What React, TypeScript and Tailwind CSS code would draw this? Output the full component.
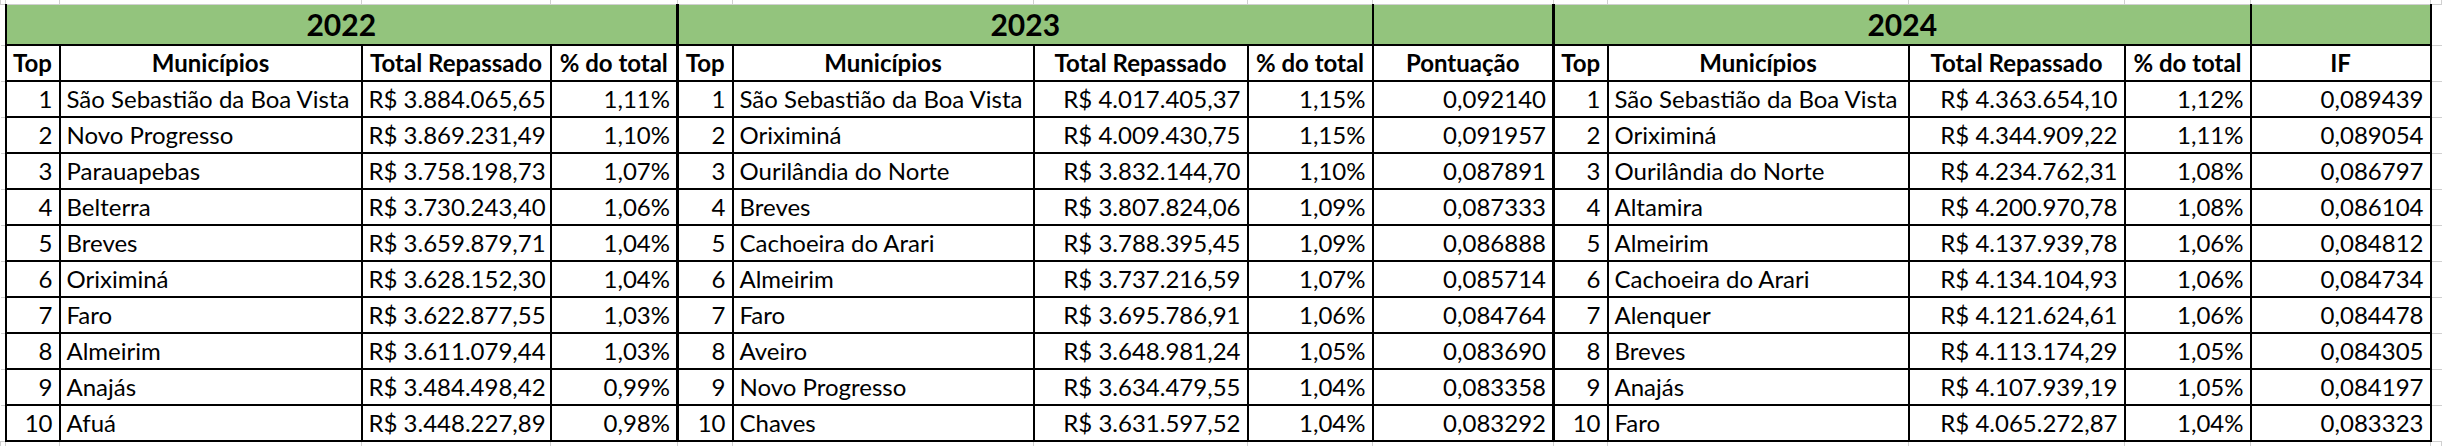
import React from 'react';

type Row = [string, string, string];

const y2022: Row[] = [
  ['São Sebastião da Boa Vista', 'R$ 3.884.065,65', '1,11%'],
  ['Novo Progresso', 'R$ 3.869.231,49', '1,10%'],
  ['Parauapebas', 'R$ 3.758.198,73', '1,07%'],
  ['Belterra', 'R$ 3.730.243,40', '1,06%'],
  ['Breves', 'R$ 3.659.879,71', '1,04%'],
  ['Oriximiná', 'R$ 3.628.152,30', '1,04%'],
  ['Faro', 'R$ 3.622.877,55', '1,03%'],
  ['Almeirim', 'R$ 3.611.079,44', '1,03%'],
  ['Anajás', 'R$ 3.484.498,42', '0,99%'],
  ['Afuá', 'R$ 3.448.227,89', '0,98%'],
];

const y2023: [string, string, string, string][] = [
  ['São Sebastião da Boa Vista', 'R$ 4.017.405,37', '1,15%', '0,092140'],
  ['Oriximiná', 'R$ 4.009.430,75', '1,15%', '0,091957'],
  ['Ourilândia do Norte', 'R$ 3.832.144,70', '1,10%', '0,087891'],
  ['Breves', 'R$ 3.807.824,06', '1,09%', '0,087333'],
  ['Cachoeira do Arari', 'R$ 3.788.395,45', '1,09%', '0,086888'],
  ['Almeirim', 'R$ 3.737.216,59', '1,07%', '0,085714'],
  ['Faro', 'R$ 3.695.786,91', '1,06%', '0,084764'],
  ['Aveiro', 'R$ 3.648.981,24', '1,05%', '0,083690'],
  ['Novo Progresso', 'R$ 3.634.479,55', '1,04%', '0,083358'],
  ['Chaves', 'R$ 3.631.597,52', '1,04%', '0,083292'],
];

const y2024: [string, string, string, string][] = [
  ['São Sebastião da Boa Vista', 'R$ 4.363.654,10', '1,12%', '0,089439'],
  ['Oriximiná', 'R$ 4.344.909,22', '1,11%', '0,089054'],
  ['Ourilândia do Norte', 'R$ 4.234.762,31', '1,08%', '0,086797'],
  ['Altamira', 'R$ 4.200.970,78', '1,08%', '0,086104'],
  ['Almeirim', 'R$ 4.137.939,78', '1,06%', '0,084812'],
  ['Cachoeira do Arari', 'R$ 4.134.104,93', '1,06%', '0,084734'],
  ['Alenquer', 'R$ 4.121.624,61', '1,06%', '0,084478'],
  ['Breves', 'R$ 4.113.174,29', '1,05%', '0,084305'],
  ['Anajás', 'R$ 4.107.939,19', '1,05%', '0,084197'],
  ['Faro', 'R$ 4.065.272,87', '1,04%', '0,083323'],
];

const colWidths = [
  'w-[5px]',
  'w-[54px]', 'w-[302px]', 'w-[189px]', 'w-[127px]',
  'w-[55px]', 'w-[301px]', 'w-[214px]', 'w-[125px]', 'w-[181px]',
  'w-[54px]', 'w-[301px]', 'w-[216px]', 'w-[126px]', 'w-[180px]',
  'w-[11px]',
];

// excel gridline cells outside the table
const grid = 'border border-[#d0d0d0] p-0';
const cell = 'border-2 border-black px-[6px] py-0 whitespace-nowrap overflow-hidden';
const num = cell + ' text-right';
const txt = cell + ' text-left';
const head = cell + ' text-center font-bold';
const thick = 'border-l-[3px]';
const banner = ' bg-[#93c47d] border-t border-t-[#d0d0d0]';

export default function App() {
  return (
    <div className="w-[2442px] h-[446px] bg-white overflow-hidden">
      <table className="table-fixed w-[2442px] text-black text-[24px] leading-none font-['Lato','Liberation_Sans',sans-serif]">
        <colgroup>
          {colWidths.map((w, i) => (
            <col key={i} className={w} />
          ))}
        </colgroup>
        <tbody>
          {/* spreadsheet row above */}
          <tr className="h-[4px]">
            {colWidths.map((_, i) => (
              <td key={i} className={grid + ' border-t-0'} />
            ))}
          </tr>

          {/* year banner */}
          <tr className="h-[41px]">
            <td className={grid + ' border-l-0'} />
            <td colSpan={4} className={head + banner + ' text-[30px]'}>2022</td>
            <td colSpan={4} className={head + ' ' + thick + banner + ' text-[30px]'}>2023</td>
            <td className={head + banner} />
            <td colSpan={4} className={head + ' ' + thick + banner + ' text-[30px]'}>2024</td>
            <td className={head + banner} />
            <td className={grid + ' border-r-0'} />
          </tr>

          {/* column titles */}
          <tr className="h-[36px]">
            <td className={grid + ' border-l-0'} />
            <td className={head}>Top</td>
            <td className={head}>Municípios</td>
            <td className={head}>Total Repassado</td>
            <td className={head}>% do total</td>
            <td className={head + ' ' + thick}>Top</td>
            <td className={head}>Municípios</td>
            <td className={head}>Total Repassado</td>
            <td className={head}>% do total</td>
            <td className={head}>Pontuação</td>
            <td className={head + ' ' + thick}>Top</td>
            <td className={head}>Municípios</td>
            <td className={head}>Total Repassado</td>
            <td className={head}>% do total</td>
            <td className={head}>IF</td>
            <td className={grid + ' border-r-0'} />
          </tr>

          {y2022.map((r, i) => {
            const b = y2023[i];
            const c = y2024[i];
            return (
              <tr key={i} className="h-[36px]">
                <td className={grid + ' border-l-0'} />
                <td className={num}>{i + 1}</td>
                <td className={txt}>{r[0]}</td>
                <td className={num}>{r[1]}</td>
                <td className={num}>{r[2]}</td>
                <td className={num + ' ' + thick}>{i + 1}</td>
                <td className={txt}>{b[0]}</td>
                <td className={num}>{b[1]}</td>
                <td className={num}>{b[2]}</td>
                <td className={num}>{b[3]}</td>
                <td className={num + ' ' + thick}>{i + 1}</td>
                <td className={txt}>{c[0]}</td>
                <td className={num}>{c[1]}</td>
                <td className={num}>{c[2]}</td>
                <td className={num}>{c[3]}</td>
                <td className={grid + ' border-r-0'} />
              </tr>
            );
          })}

          {/* spreadsheet row below */}
          <tr className="h-[5px]">
            {colWidths.map((_, i) => (
              <td key={i} className={grid + ' border-b-0'} />
            ))}
          </tr>
        </tbody>
      </table>
    </div>
  );
}
